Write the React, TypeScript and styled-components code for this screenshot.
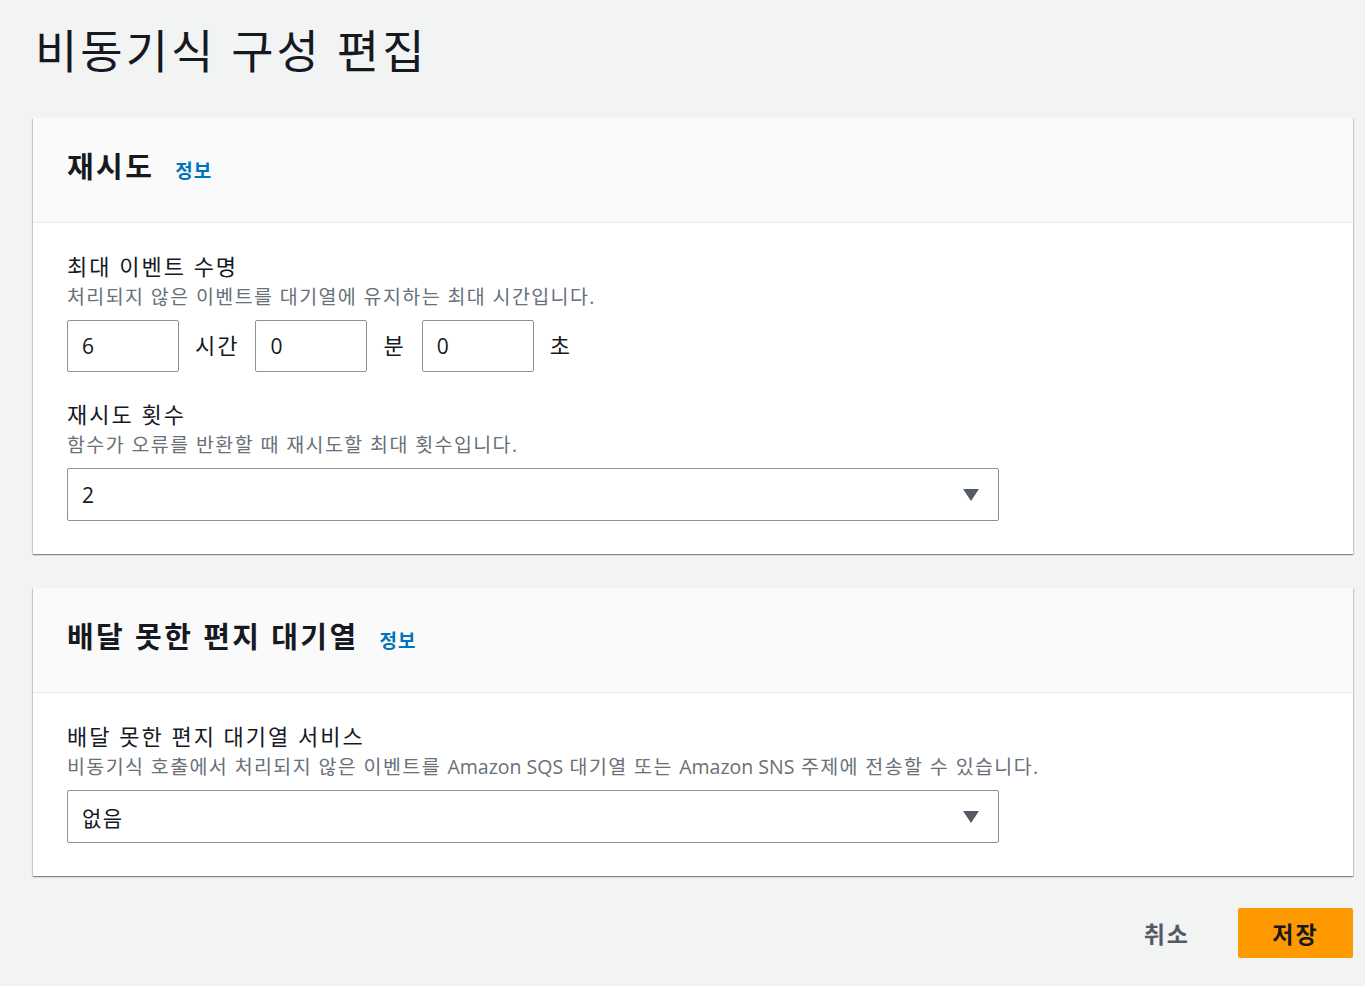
import { FC } from "react";
import styled, { createGlobalStyle } from "styled-components";

const GlobalStyle = createGlobalStyle`
  html, body {
    margin: 0;
    padding: 0;
    background: #f2f3f3;
  }
  body {
    font-family: "Open Sans", "Noto Sans CJK KR", sans-serif;
    color: #16191f;
  }
`;

type SelectProps = {
  value: string;
};

const Select: FC<SelectProps> = ({ value }) => {
  return (
    <SelectBox>
      <span>{value}</span>
      <Caret viewBox="0 0 16 12">
        <path d="M0 0 H16 L8 12 Z" fill="#545b64" />
      </Caret>
    </SelectBox>
  );
};

const App: FC = () => {
  return (
    <Page>
      <GlobalStyle />
      <Title>비동기식 구성 편집</Title>

      <Card>
        <CardHeader>
          <h2>재시도</h2>
          <InfoLink>정보</InfoLink>
        </CardHeader>
        <CardBody>
          <Label>최대 이벤트 수명</Label>
          <Description>처리되지 않은 이벤트를 대기열에 유지하는 최대 시간입니다.</Description>
          <DurationRow>
            <NumberInput>6</NumberInput>
            <Unit>시간</Unit>
            <NumberInput>0</NumberInput>
            <Unit>분</Unit>
            <NumberInput>0</NumberInput>
            <Unit>초</Unit>
          </DurationRow>

          <Label $spaced>재시도 횟수</Label>
          <Description>함수가 오류를 반환할 때 재시도할 최대 횟수입니다.</Description>
          <Select value="2" />
        </CardBody>
      </Card>

      <Card>
        <CardHeader>
          <h2>배달 못한 편지 대기열</h2>
          <InfoLink>정보</InfoLink>
        </CardHeader>
        <CardBody>
          <Label>배달 못한 편지 대기열 서비스</Label>
          <Description>
            비동기식 호출에서 처리되지 않은 이벤트를 <Latin>Amazon SQS</Latin> 대기열 또는{" "}
            <Latin>Amazon SNS</Latin> 주제에 전송할 수 있습니다.
          </Description>
          <Select value="없음" />
        </CardBody>
      </Card>

      <Actions>
        <CancelButton>취소</CancelButton>
        <PrimaryButton>저장</PrimaryButton>
      </Actions>
    </Page>
  );
};

const Page = styled.div`
  display: flex;
  flex-direction: column;
  gap: 34px;
  padding: 20px 12px 28px 33px;
  min-height: 986px;
  box-sizing: border-box;
`;

const Title = styled.h1`
  margin: 0 0 4px 2px;
  font-size: 46px;
  line-height: 60px;
  font-weight: 400;
  letter-spacing: 3px;
  color: #16191f;
`;

const Card = styled.section`
  background: #ffffff;
  box-shadow: 0 1px 1px 0 rgba(0, 28, 36, 0.3),
    1px 1px 1px 0 rgba(0, 28, 36, 0.15),
    -1px 1px 1px 0 rgba(0, 28, 36, 0.15);
`;

const CardHeader = styled.div`
  display: flex;
  align-items: baseline;
  gap: 21px;
  padding: 29px 34px 35px;
  background: #fafafa;
  border-bottom: 1px solid #eaeded;

  h2 {
    margin: 0;
    font-size: 29px;
    line-height: 40px;
    font-weight: 700;
    letter-spacing: 2.4px;
    color: #16191f;
  }
`;

const InfoLink = styled.a`
  font-size: 19px;
  font-weight: 700;
  letter-spacing: 1px;
  color: #0073bb;
  cursor: pointer;
`;

const CardBody = styled.div`
  display: flex;
  flex-direction: column;
  align-items: flex-start;
  padding: 28px 34px 33px;
`;

const Label = styled.div<{ $spaced?: boolean }>`
  margin-top: ${({ $spaced }) => ($spaced ? "27px" : "0")};
  font-size: 22px;
  line-height: 30px;
  letter-spacing: 2px;
  color: #16191f;
`;

const Description = styled.div`
  margin-top: 1px;
  margin-bottom: 8px;
  font-size: 19.5px;
  line-height: 30px;
  letter-spacing: 1.4px;
  color: #687078;
`;

const Latin = styled.span`
  letter-spacing: 0;
`;

const DurationRow = styled.div`
  display: flex;
  align-items: center;
  gap: 16px;
`;

const NumberInput = styled.div`
  box-sizing: border-box;
  width: 112px;
  height: 52px;
  display: flex;
  align-items: center;
  padding: 0 14px;
  border: 1px solid #879596;
  border-radius: 2px;
  background: #ffffff;
  font-size: 21px;
  color: #16191f;
`;

const Unit = styled.span`
  font-size: 22px;
  letter-spacing: 2px;
  color: #16191f;
  transform: translateY(-2px);
`;

const SelectBox = styled.div`
  box-sizing: border-box;
  width: 932px;
  height: 53px;
  display: flex;
  align-items: center;
  justify-content: space-between;
  padding: 0 19px 0 14px;
  border: 1px solid #879596;
  border-radius: 2px;
  background: #ffffff;
  font-size: 21px;
  letter-spacing: 1.5px;
  color: #16191f;
`;

const Caret = styled.svg`
  width: 16px;
  height: 12px;
`;

const Actions = styled.div`
  display: flex;
  justify-content: flex-end;
  align-items: center;
  gap: 48px;
  margin-top: -2px;
`;

const CancelButton = styled.button`
  border: none;
  background: transparent;
  padding: 0;
  font-family: inherit;
  font-size: 23px;
  font-weight: 700;
  letter-spacing: 2px;
  color: #545b64;
  cursor: pointer;
`;

const PrimaryButton = styled.button`
  width: 115px;
  height: 50px;
  border: none;
  border-radius: 2px;
  background: #ff9900;
  font-family: inherit;
  font-size: 23px;
  font-weight: 700;
  letter-spacing: 2px;
  color: #16191f;
  cursor: pointer;
`;

export default App;
